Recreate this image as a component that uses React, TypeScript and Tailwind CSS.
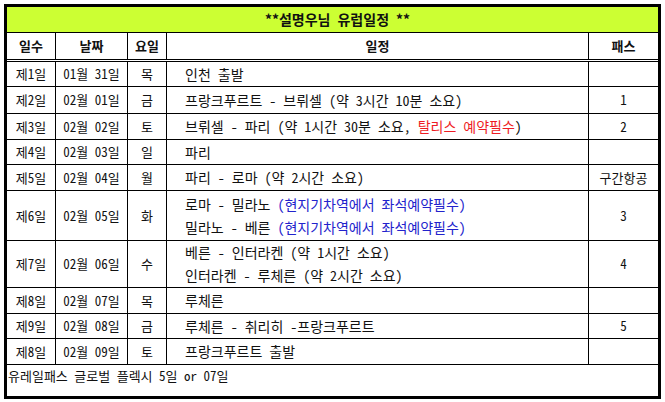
import React from "react";

type Row = {
  day: string;
  date: string;
  wd: string;
  h: string;
  plan: React.ReactNode[];
  pass: string;
};

const Blue = ({ children }: { children: React.ReactNode }) => (
  <span className="text-[#2222cc]">{children}</span>
);
const Red = ({ children }: { children: React.ReactNode }) => (
  <span className="text-[#ee1c24]">{children}</span>
);

const rows: Row[] = [
  { day: "제1일", date: "01월 31일", wd: "목", h: "h-[25px]", plan: ["인천 출발"], pass: "" },
  { day: "제2일", date: "02월 01일", wd: "금", h: "h-[27px]", plan: ["프랑크푸르트 - 브뤼셀 (약 3시간 10분 소요)"], pass: "1" },
  {
    day: "제3일",
    date: "02월 02일",
    wd: "토",
    h: "h-[26px]",
    plan: [
      <>
        브뤼셀 - 파리 (약 1시간 30분 소요, <Red>탈리스 예약필수</Red>)
      </>,
    ],
    pass: "2",
  },
  { day: "제4일", date: "02월 03일", wd: "일", h: "h-[25px]", plan: ["파리"], pass: "" },
  { day: "제5일", date: "02월 04일", wd: "월", h: "h-[26px]", plan: ["파리 - 로마 (약 2시간 소요)"], pass: "구간항공" },
  {
    day: "제6일",
    date: "02월 05일",
    wd: "화",
    h: "h-[50px]",
    plan: [
      <>
        로마 - 밀라노 <Blue>(현지기차역에서 좌석예약필수)</Blue>
      </>,
      <>
        밀라노 - 베른 <Blue>(현지기차역에서 좌석예약필수)</Blue>
      </>,
    ],
    pass: "3",
  },
  {
    day: "제7일",
    date: "02월 06일",
    wd: "수",
    h: "h-[47px]",
    plan: ["베른 - 인터라켄 (약 1시간 소요)", "인터라켄 - 루체른 (약 2시간 소요)"],
    pass: "4",
  },
  { day: "제8일", date: "02월 07일", wd: "목", h: "h-[26px]", plan: ["루체른"], pass: "" },
  { day: "제9일", date: "02월 08일", wd: "금", h: "h-[25px]", plan: ["루체른 - 취리히 -프랑크푸르트"], pass: "5" },
  { day: "제8일", date: "02월 09일", wd: "토", h: "h-[26px]", plan: ["프랑크푸르트 출발"], pass: "" },
];

export default function App() {
  return (
    <div className="w-[665px] h-[402px] bg-white pt-[4px] pl-[4px] font-['Noto_Sans_Mono_CJK_KR','Noto_Sans_CJK_KR',sans-serif] [font-feature-settings:'hwid'] text-[#111]">
      <div className="w-[657px] h-[395px] border-[3px] border-black flex flex-col">
        {/* title */}
        <div className="h-[26px] border-b border-black bg-[#ccff33] flex items-center justify-center pl-[10px] text-[14px] font-bold">
          **설명우님 유럽일정 **
        </div>
        {/* header */}
        <div className="h-[29px] border-b-[3px] border-double border-black flex text-[13px] font-bold">
          <div className="w-[49px] border-r border-black flex items-center justify-center">일수</div>
          <div className="w-[72px] border-r border-black flex items-center justify-center">날짜</div>
          <div className="w-[39px] border-r border-black flex items-center justify-center">요일</div>
          <div className="w-[422px] border-r border-black flex items-center justify-center">일정</div>
          <div className="w-[69px] flex items-center justify-center">패스</div>
        </div>
        {rows.map((r, i) => (
          <div key={i} className={`${r.h} border-b border-black flex`}>
            <div className="w-[49px] border-r border-black flex items-center justify-center text-[13px]">{r.day}</div>
            <div className="w-[72px] border-r border-black flex items-center justify-center text-[13px]">{r.date}</div>
            <div className="w-[39px] border-r border-black flex items-center justify-center text-[13px]">{r.wd}</div>
            <div className="w-[422px] border-r border-black flex flex-col justify-center pl-[18px] text-[14px] leading-[23px] whitespace-nowrap">
              {r.plan.map((p, j) => (
                <div key={j}>{p}</div>
              ))}
            </div>
            <div className="w-[69px] flex items-center justify-center text-[13px]">{r.pass}</div>
          </div>
        ))}
        <div className="flex-1 pl-[1px] pt-[1px] text-[13px] leading-[20px]">유레일패스 글로벌 플렉시 5일 or 07일</div>
      </div>
    </div>
  );
}
